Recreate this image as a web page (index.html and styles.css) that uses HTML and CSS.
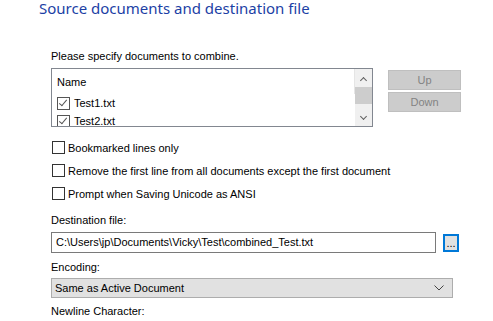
FILE: index.html
```html
<!DOCTYPE html>
<html lang="en">
<head>
  <meta charset="UTF-8">
  <meta name="viewport" content="width=device-width, initial-scale=1.0">
  <title>Combine Documents</title>
  <link rel="stylesheet" href="styles.css">
</head>
<body>
  <h1 class="title">Source documents and destination file</h1>
  <div class="content">
    <p class="label intro">Please specify documents to combine.</p>

    <div class="list-row">
      <div class="listbox">
        <div class="list-main">
          <div class="list-header">Name</div>
          <div class="list-item"><span class="check checked"></span>Test1.txt</div>
          <div class="list-item"><span class="check checked"></span>Test2.txt</div>
        </div>
        <div class="scrollbar">
          <span class="arrow up"></span>
          <span class="thumb"></span>
          <span class="arrow down"></span>
        </div>
      </div>
      <div class="side-buttons">
        <button class="btn" disabled>Up</button>
        <button class="btn" disabled>Down</button>
      </div>
    </div>

    <div class="options">
      <label class="option"><span class="box"></span>Bookmarked lines only</label>
      <label class="option"><span class="box"></span>Remove the first line from all documents except the first document</label>
      <label class="option"><span class="box"></span>Prompt when Saving Unicode as ANSI</label>
    </div>

    <p class="label">Destination file:</p>
    <div class="file-row">
      <div class="textbox">C:\Users\jp\Documents\Vicky\Test\combined_Test.txt</div>
      <button class="browse">...</button>
    </div>

    <p class="label">Encoding:</p>
    <div class="combo">
      <span>Same as Active Document</span>
      <svg class="combo-arrow" width="10" height="6" viewBox="0 0 10 6"><path d="M0.5 0.5 L5 5 L9.5 0.5" fill="none" stroke="#444" stroke-width="1"/></svg>
    </div>

    <p class="label">Newline Character:</p>
  </div>
</body>
</html>
```

FILE: styles.css
```css
body {
  margin: 0;
  background: #fff;
  font-family: 'Liberation Sans', Arial, sans-serif;
  font-size: 11px;
  color: #000;
  width: 493px;
  height: 321px;
  overflow: hidden;
}
.title {
  margin: 0 0 0 39px;
  padding-top: 1px;
  font-family: 'Noto Sans', sans-serif;
  font-size: 15px;
  font-weight: normal;
  color: #1c3fa5;
  line-height: 15px;
}
.content {
  padding-left: 51px;
}
.label {
  margin: 0;
  line-height: 16px;
}
.intro {
  margin-top: 32px;
  margin-bottom: 4px;
}
.list-row {
  display: flex;
  align-items: flex-start;
}
.listbox {
  width: 320px;
  height: 57px;
  border: 1px solid #828790;
  display: flex;
  overflow: hidden;
}
.list-main {
  flex: 1;
}
.list-header {
  height: 23px;
  line-height: 23px;
  padding: 2px 0 0 5px;
  border-right: 1px solid #e5e5e5;
}
.list-item {
  display: flex;
  align-items: center;
  height: 18px;
  padding-left: 5px;
}
.check {
  width: 11px;
  height: 11px;
  border: 1px solid #555;
  margin-right: 4px;
  position: relative;
}
.check.checked::after {
  content: "";
  position: absolute;
  left: 3px;
  top: 0px;
  width: 3px;
  height: 7px;
  border: solid #555;
  border-width: 0 1px 1px 0;
  transform: rotate(40deg);
}
.scrollbar {
  width: 17px;
  background: #f0f0f0;
  display: flex;
  flex-direction: column;
}
.arrow {
  height: 17px;
  width: 17px;
  position: relative;
}
.arrow::after {
  content: "";
  position: absolute;
  left: 6px;
  width: 4px;
  height: 4px;
  border: solid #606060;
  border-width: 1px 0 0 1px;
}
.arrow.up::after {
  top: 9px;
  transform: rotate(45deg);
}
.arrow.down::after {
  top: 5px;
  transform: rotate(225deg);
}
.thumb {
  width: 17px;
  height: 17px;
  margin-top: 1px;
  background: #cdcdcd;
}
.scrollbar .down {
  margin-top: auto;
}
.side-buttons {
  display: flex;
  flex-direction: column;
  gap: 2px;
  margin-left: 15px;
  margin-top: 2px;
}
.btn {
  width: 73px;
  height: 20px;
  background: #cccccc;
  border: 1px solid #bfbfbf;
  color: #838383;
  font-family: inherit;
  font-size: 11px;
  padding: 0;
}
.options {
  margin-top: 12px;
  display: flex;
  flex-direction: column;
  gap: 6px;
  margin-bottom: 10px;
}
.option {
  display: flex;
  align-items: center;
  height: 17px;
}
.box {
  width: 11px;
  height: 11px;
  border: 1px solid #333;
  background: #fff;
  margin-right: 3px;
  margin-left: 1px;
}
.file-row {
  display: flex;
  align-items: center;
  margin: 4px 0 6px;
}
.textbox {
  width: 379px;
  height: 19px;
  line-height: 19px;
  border: 1px solid #7a7a7a;
  padding-left: 4px;
}
.browse {
  width: 16px;
  height: 18px;
  margin-left: 7px;
  background: #e1e1e1;
  border: 2px solid #0078d7;
  padding: 0;
  font-family: inherit;
  font-size: 11px;
  line-height: 10px;
  color: #000;
}
.combo {
  height: 18px;
  margin: 3px 0 5px;
  border: 1px solid #adadad;
  background: #e1e1e1;
  display: flex;
  align-items: center;
  justify-content: space-between;
  padding: 0 0 0 3px;
  width: 397px;
}
.combo-arrow {
  margin-right: 8px;
}
```
